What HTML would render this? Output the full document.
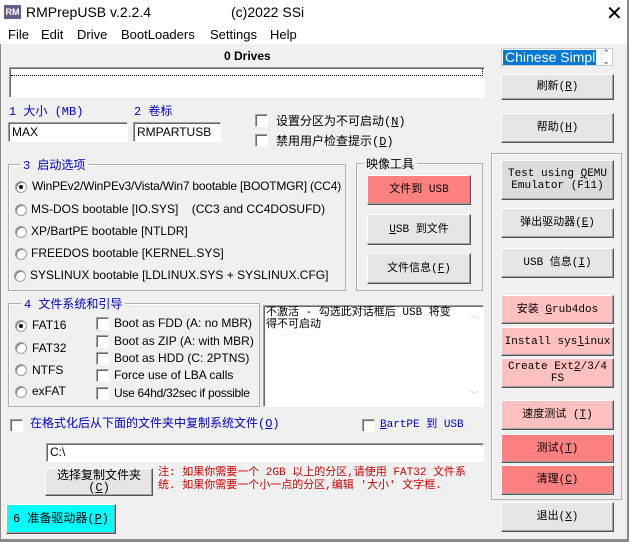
<!DOCTYPE html>
<html><head><meta charset="utf-8"><style>
*{box-sizing:border-box;margin:0;padding:0}
body{width:629px;height:542px;background:#f0f0f0;position:relative;overflow:hidden;font-family:"Liberation Sans","Noto Sans CJK SC",sans-serif;font-size:12px;color:#000}
.a{position:absolute;white-space:nowrap}
.cn{font-family:"Liberation Mono","Noto Sans CJK SC",sans-serif;font-size:12px}
.btn{position:absolute;background:#e6e6e6;border:1px solid;border-color:#fff #555 #555 #fff;box-shadow:inset -1px -1px 0 #a0a0a0;display:flex;align-items:center;justify-content:center;text-align:center;line-height:12px;font-family:"Liberation Mono","Noto Sans CJK SC",monospace;font-size:11px;white-space:nowrap}
.btn>span{display:block}
.pk{background:#ffc0c0}.rd{background:#ff8080}
.grp{position:absolute;border:1px solid #b0b0b0;box-shadow:1px 1px 0 #fff inset}
.gt{position:absolute;background:#f0f0f0;padding:0 3px;top:-9px;font-family:"Liberation Mono","Noto Sans CJK SC",monospace;font-size:12px}
.in{position:absolute;background:#fff;border:1px solid;border-color:#a0a0a0 #fff #fff #a0a0a0;box-shadow:inset 1px 1px 0 #696969;padding:2px 3px;font-size:12px}
.cb{position:absolute;width:13px;height:13px;background:#fff;border:1px solid;border-color:#a0a0a0 #fff #fff #a0a0a0;box-shadow:inset 1px 1px 0 #696969}
.rb{position:absolute;width:12px;height:12px;border-radius:50%;background:#fff;border:1px solid #a0a0a0;box-shadow:inset 1px 1px 0 #777}
.rb.on::after{content:"";position:absolute;left:3px;top:3px;width:4px;height:4px;border-radius:50%;background:#000}
.blue{color:#0000c8}
</style></head><body>
<div class="a" style="left:0;top:0;width:629px;height:44px;background:#fff"></div>
<div class="a" style="left:4px;top:5px;width:17px;height:14px;background:#6a5a8a;color:#fff;font-size:9px;font-weight:bold;line-height:14px;text-align:center">RM</div>
<div class="a" style="left:26px;top:4px;font-size:14px">RMPrepUSB v.2.2.4</div>
<div class="a" style="left:231px;top:4px;font-size:14px">(c)2022 SSi</div>
<div class="a" style="left:606px;top:1px;font-size:20px;font-weight:300">✕</div>
<div class="a" style="left:8px;top:27px;font-size:13px">File</div>
<div class="a" style="left:41px;top:27px;font-size:13px">Edit</div>
<div class="a" style="left:77px;top:27px;font-size:13px">Drive</div>
<div class="a" style="left:121px;top:27px;font-size:13px">BootLoaders</div>
<div class="a" style="left:210px;top:27px;font-size:13px">Settings</div>
<div class="a" style="left:270px;top:27px;font-size:13px">Help</div>
<div class="a" style="left:0;top:44px;width:1px;height:498px;background:#888"></div>
<div class="a" style="left:627px;top:0;width:2px;height:542px;background:#888"></div>
<div class="a" style="left:0;top:539px;width:629px;height:3px;background:#888"></div>

<div class="a" style="left:224px;top:49px;font-weight:bold">0 Drives</div>
<div class="in" style="left:9px;top:67px;width:476px;height:31px;padding:0"><div style="margin:1px;height:7px;border:1px dotted #000;border-left:none;border-top:none"></div></div>
<div class="a" style="left:501px;top:48px;width:112px;height:18px;background:#fff;border:1px solid #ccc"><div style="position:absolute;left:1px;top:1px;width:93px;height:15px;background:#0078d7;color:#fff;font-size:14px;line-height:15px;padding-left:2px;overflow:hidden">Chinese Simpli</div><div style="position:absolute;right:2px;top:0;font-size:9px;line-height:8px;color:#555">⌃<br>⌄</div></div>
<div class="btn" style="left:501px;top:74px;width:113px;height:26px"><span>刷新(<u>R</u>)</span></div>

<div class="a cn blue" style="left:9px;top:102px">1 大小 (MB)</div>
<div class="a cn blue" style="left:134px;top:102px">2 卷标</div>
<div class="in" style="left:8px;top:122px;width:120px;height:20px">MAX</div>
<div class="in" style="left:133px;top:122px;width:88px;height:20px">RMPARTUSB</div>
<div class="cb" style="left:255px;top:114px"></div><div class="a cn" style="left:276px;top:112px">设置分区为不可启动(<u>N</u>)</div>
<div class="cb" style="left:255px;top:134px"></div><div class="a cn" style="left:276px;top:132px">禁用用户检查提示(<u>D</u>)</div>
<div class="btn" style="left:501px;top:113px;width:113px;height:30px"><span>帮助(<u>H</u>)</span></div>

<div class="grp" style="left:8px;top:164px;width:338px;height:127px"><div class="gt blue" style="left:11px">3 启动选项</div></div>
<div class="rb on" style="left:15px;top:181px"></div><div class="a" style="left:32px;top:179px;letter-spacing:-0.2px">WinPEv2/WinPEv3/Vista/Win7 bootable [BOOTMGR] (CC4)</div>
<div class="rb" style="left:15px;top:204px"></div><div class="a" style="left:31px;top:202px">MS-DOS bootable [IO.SYS]&nbsp;&nbsp;&nbsp;&nbsp;(CC3 and CC4DOSUFD)</div>
<div class="rb" style="left:15px;top:226px"></div><div class="a" style="left:31px;top:224px">XP/BartPE bootable [NTLDR]</div>
<div class="rb" style="left:15px;top:248px"></div><div class="a" style="left:31px;top:246px">FREEDOS bootable [KERNEL.SYS]</div>
<div class="rb" style="left:14px;top:270px"></div><div class="a" style="left:30px;top:268px">SYSLINUX bootable [LDLINUX.SYS + SYSLINUX.CFG]</div>

<div class="grp" style="left:356px;top:163px;width:127px;height:128px"><div class="gt" style="left:6px">映像工具</div></div>
<div class="btn rd" style="left:367px;top:175px;width:104px;height:30px"><span>文件到 USB</span></div>
<div class="btn" style="left:367px;top:214px;width:104px;height:31px"><span><u>U</u>SB 到文件</span></div>
<div class="btn" style="left:367px;top:253px;width:104px;height:31px"><span>文件信息(<u>F</u>)</span></div>

<div class="grp" style="left:491px;top:153px;width:131px;height:347px"></div>
<div class="btn" style="left:501px;top:160px;width:113px;height:40px;background:#dcdcdc"><span>Test using <u>Q</u>EMU<br>Emulator (F11)</span></div>
<div class="btn" style="left:501px;top:208px;width:113px;height:30px"><span>弹出驱动器(<u>E</u>)</span></div>
<div class="btn" style="left:501px;top:248px;width:113px;height:30px"><span>USB 信息(<u>I</u>)</span></div>
<div class="btn pk" style="left:501px;top:295px;width:113px;height:29px"><span>安装 <u>G</u>rub4dos</span></div>
<div class="btn pk" style="left:501px;top:327px;width:113px;height:29px"><span>Install sys<u>l</u>inux</span></div>
<div class="btn pk" style="left:501px;top:358px;width:113px;height:30px;align-items:flex-start;padding-top:2px"><span>Create Ext<u>2</u>/3/4<br>FS</span></div>
<div class="btn pk" style="left:501px;top:400px;width:113px;height:30px"><span>速度测试 (<u>T</u>)</span></div>
<div class="btn rd" style="left:501px;top:434px;width:113px;height:29px"><span>测试(<u>T</u>)</span></div>
<div class="btn rd" style="left:501px;top:465px;width:113px;height:30px"><span>清理(<u>C</u>)</span></div>
<div class="btn" style="left:501px;top:502px;width:113px;height:30px"><span>退出(<u>X</u>)</span></div>

<div class="grp" style="left:8px;top:303px;width:252px;height:104px"><div class="gt blue" style="left:12px">4 文件系统和引导</div></div>
<div class="rb on" style="left:15px;top:320px"></div><div class="a" style="left:32px;top:318px">FAT16</div>
<div class="rb" style="left:15px;top:342px"></div><div class="a" style="left:32px;top:341px">FAT32</div>
<div class="rb" style="left:15px;top:364px"></div><div class="a" style="left:32px;top:363px">NTFS</div>
<div class="rb" style="left:15px;top:386px"></div><div class="a" style="left:32px;top:384px">exFAT</div>
<div class="cb" style="left:96px;top:317px"></div><div class="a" style="left:114px;top:316px">Boot as FDD (A: no MBR)</div>
<div class="cb" style="left:96px;top:335px"></div><div class="a" style="left:114px;top:334px">Boot as ZIP (A: with MBR)</div>
<div class="cb" style="left:96px;top:352px"></div><div class="a" style="left:114px;top:351px">Boot as HDD (C: 2PTNS)</div>
<div class="cb" style="left:96px;top:369px"></div><div class="a" style="left:114px;top:368px">Force use of LBA calls</div>
<div class="cb" style="left:96px;top:387px"></div><div class="a" style="left:114px;top:386px;letter-spacing:-0.3px">Use 64hd/32sec if possible</div>

<div class="in" style="left:263px;top:305px;width:221px;height:102px;padding:1px 2px;font-family:'Liberation Mono','Noto Sans CJK SC',monospace;font-size:11px;line-height:12px;white-space:normal">不激活 - 勾选此对话框后 USB 将变<br>得不可启动<div style="position:absolute;right:4px;top:4px;color:#ccc;font-size:9px">︿</div><div style="position:absolute;right:4px;bottom:4px;color:#ccc;font-size:9px">﹀</div></div>

<div class="cb" style="left:10px;top:419px"></div><div class="a cn blue" style="left:30px;top:414px">在格式化后从下面的文件夹中复制系统文件(<u>O</u>)</div>
<div class="cb" style="left:362px;top:419px"></div><div class="a cn blue" style="left:380px;top:415px;font-size:11px"><u>B</u>artPE 到 USB</div>
<div class="in" style="left:46px;top:443px;width:438px;height:19px;padding:1px 3px">C:\</div>
<div class="btn" style="left:45px;top:468px;width:108px;height:28px;line-height:12px;font-size:12px"><span>选择复制文件夹<br>(<u>C</u>)</span></div>
<div class="a cn" style="left:158px;top:467px;color:#d00000;line-height:13px;font-size:11px">注: 如果你需要一个 2GB 以上的分区,请使用 FAT32 文件系<br>统. 如果你需要一个小一点的分区,编辑 '大小' 文字框.</div>
<div class="btn" style="left:6px;top:504px;width:110px;height:30px;background:#00ffff;font-size:12px"><span>6 准备驱动器(<u>P</u>)</span></div>
</body></html>
